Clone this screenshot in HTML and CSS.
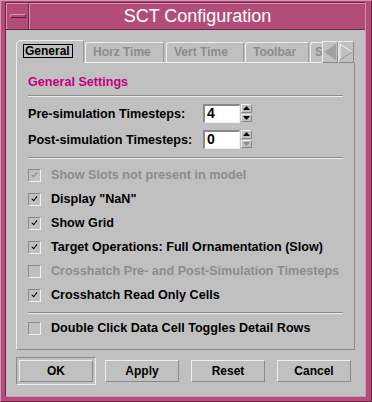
FILE: index.html
```html
<!DOCTYPE html>
<html lang="en">
<head>
    <meta charset="UTF-8">
    <link rel="stylesheet" href="styles.css">
    <title>SCT Configuration</title>
</head>
<body>
    <div class="window">
        <div class="inner">
            <div class="titlebar">
                <div class="menu-btn"><span></span></div>
                <div class="title">SCT Configuration</div>
            </div>
            <div class="client">
                <div class="tabs">
                    <div class="tab active"><span class="focus">General</span></div>
                    <div class="tab w-horz">Horz Time</div>
                    <div class="tab w-vert">Vert Time</div>
                    <div class="tab w-tool">Toolbar</div>
                    <div class="tab w-cut">S</div>
                    <div class="arrows">
                        <div class="arrow">
                            <svg width="14" height="18" viewBox="0 0 14 18"><polygon points="13,1 1,9 13,17" fill="#a2a2a2"/></svg>
                        </div>
                        <div class="arrow">
                            <svg width="14" height="18" viewBox="0 0 14 18"><polyline points="1,1 13,9" stroke="#f4f4f4" fill="none"/><polyline points="1,1 1,17 13,9" stroke="#f4f4f4" fill="none"/><line x1="1" y1="17" x2="13" y2="9" stroke="#8a8a8a"/></svg>
                        </div>
                    </div>
                </div>
                <div class="panel">
                    <div class="heading">General Settings</div>
                    <div class="sep"></div>
                    <div class="spin-row">
                        <span class="label">Pre-simulation Timesteps:</span>
                        <span class="field">4</span>
                        <span class="spinner">
                            <span class="sp-btn"><svg width="7" height="4" viewBox="0 0 7 4"><polygon points="0,4 3.5,0 7,4" fill="#000"/></svg></span>
                            <span class="sp-btn"><svg width="7" height="4" viewBox="0 0 7 4"><polygon points="0,0 3.5,4 7,0" fill="#000"/></svg></span>
                        </span>
                    </div>
                    <div class="spin-row">
                        <span class="label">Post-simulation Timesteps:</span>
                        <span class="field">0</span>
                        <span class="spinner">
                            <span class="sp-btn"><svg width="7" height="4" viewBox="0 0 7 4"><polygon points="0,4 3.5,0 7,4" fill="#000"/></svg></span>
                            <span class="sp-btn"><svg width="7" height="4" viewBox="0 0 7 4"><polygon points="0,0 3.5,4 7,0" fill="#8c8c8c"/></svg></span>
                        </span>
                    </div>
                    <div class="sep low"></div>
                    <div class="check disabled"><span class="box on"></span>Show Slots not present in model</div>
                    <div class="check"><span class="box on"></span>Display "NaN"</div>
                    <div class="check"><span class="box on"></span>Show Grid</div>
                    <div class="check"><span class="box on"></span>Target Operations: Full Ornamentation (Slow)</div>
                    <div class="check disabled"><span class="box"></span>Crosshatch Pre- and Post-Simulation Timesteps</div>
                    <div class="check"><span class="box on"></span>Crosshatch Read Only Cells</div>
                    <div class="sep last"></div>
                    <div class="check"><span class="box"></span>Double Click Data Cell Toggles Detail Rows</div>
                </div>
                <div class="buttons">
                    <div class="default-ring"><button>OK</button></div>
                    <button>Apply</button>
                    <button>Reset</button>
                    <button>Cancel</button>
                </div>
            </div>
        </div>
    </div>
</body>
</html>
```

FILE: styles.css
```css
*, ::after, ::before{
    margin: 0;
    padding: 0;
    box-sizing: border-box;
}
body{
    background: #fff;
    font-family: "Liberation Sans", Arial, sans-serif;
}
.window{
    width: 372px;
    height: 402px;
    background: #b24d79;
    border-top: 1px solid #d993b3;
    border-left: 1px solid #d993b3;
    border-bottom: 1px solid #6f2548;
    border-right: 1px solid #6f2548;
    padding: 1px 5px 4px 4px;
}
.inner{
    height: 100%;
    display: flex;
    flex-direction: column;
    border-top: 1px solid #6f2548;
    border-left: 1px solid #6f2548;
    border-bottom: 1px solid #d993b3;
    border-right: 1px solid #d993b3;
}
.titlebar{
    height: 27px;
    display: flex;
    flex-shrink: 0;
    border-bottom: 1px solid #6f2548;
    .menu-btn{
        width: 23px;
        display: flex;
        align-items: center;
        justify-content: center;
        border-top: 1px solid #d993b3;
        border-left: 1px solid #d993b3;
        border-right: 1px solid #6f2548;
        span{
            width: 16px;
            height: 4px;
            border-top: 1px solid #d993b3;
            border-left: 1px solid #d993b3;
            border-bottom: 1px solid #5a1c3a;
            border-right: 1px solid #5a1c3a;
            margin-top: -2px;
        }
    }
    .title{
        flex: 1;
        text-align: center;
        color: #fff;
        font-size: 18px;
        line-height: 25px;
        border-top: 1px solid #d993b3;
        border-left: 1px solid #d993b3;
    }
}
.client{
    flex: 1;
    background: #c0c0c0;
    padding: 10px 10px 0 10px;
}
.tabs{
    display: flex;
    align-items: flex-end;
    height: 22px;
    font-size: 12px;
    font-weight: bold;
    .tab{
        height: 20px;
        line-height: 18px;
        color: #8c8c8c;
        border-top: 1px solid #eeeeee;
        border-left: 1px solid #eeeeee;
        border-right: 1px solid #9a9a9a;
        border-top-left-radius: 3px;
        padding-left: 7px;
        overflow: hidden;
        white-space: nowrap;
        margin-right: 1px;
    }
    .active{
        width: 68px;
        height: 23px;
        margin-bottom: -1px;
        color: #000;
        padding-left: 6px;
        padding-top: 3px;
        border-top-left-radius: 5px;
        background: #c0c0c0;
        position: relative;
        z-index: 1;
        .focus{
            display: block;
            width: 50px;
            height: 14px;
            line-height: 12px;
            border: 1px solid #000;
            padding-left: 1px;
        }
    }
    .w-horz{ width: 79px; margin-right: 2px; }
    .w-vert{ width: 78px; }
    .w-tool{ width: 64px; }
    .w-cut{ width: 12px; padding-left: 4px; margin-right: 0; border-right: none; }
    .arrows{
        display: flex;
        height: 22px;
        margin-bottom: -1px;
        .arrow{
            width: 16px;
            display: flex;
            align-items: center;
            justify-content: center;
            border-top: 1px solid #eeeeee;
            border-left: 1px solid #eeeeee;
            border-bottom: 1px solid #8a8a8a;
            border-right: 1px solid #8a8a8a;
        }
    }
}
.panel{
    width: 339px;
    height: 288px;
    border-top: 1px solid #eeeeee;
    border-left: 1px solid #eeeeee;
    border-bottom: 1px solid #888;
    border-right: 1px solid #888;
    padding: 11px 11px 0 11px;
    font-size: 12.6px;
    font-weight: bold;
    white-space: nowrap;
    .heading{
        color: #c0007e;
        height: 16px;
        line-height: 16px;
    }
    .sep{
        height: 2px;
        border-top: 1px solid #8a8a8a;
        border-bottom: 1px solid #ececec;
        margin: 5px 0 7px 0;
    }
    .sep.low{
        margin: 8px 0 4px 0;
    }
    .sep.last{
        margin: 5px 0 2px 0;
    }
}
.spin-row{
    display: flex;
    align-items: center;
    height: 19px;
    margin-bottom: 7px;
    .label{
        width: 175px;
    }
    .field{
        width: 37px;
        height: 19px;
        background: #fff;
        border-top: 2px solid #888;
        border-left: 2px solid #888;
        border-bottom: 1px solid #eee;
        border-right: 1px solid #eee;
        font-size: 14px;
        line-height: 15px;
        padding-left: 2px;
    }
    .spinner{
        display: flex;
        flex-direction: column;
        margin-left: 1px;
        height: 19px;
    }
    .sp-btn{
        width: 11px;
        height: 9px;
        display: flex;
        align-items: center;
        justify-content: center;
        border-top: 1px solid #eee;
        border-left: 1px solid #eee;
        border-bottom: 1px solid #888;
        border-right: 1px solid #888;
        margin-bottom: 1px;
    }
}
.check{
    display: flex;
    align-items: center;
    height: 24px;
    color: #000;
    .box{
        width: 13px;
        height: 13px;
        margin-right: 10px;
        border-top: 1px solid #8a8a8a;
        border-left: 1px solid #8a8a8a;
        border-bottom: 1px solid #f0f0f0;
        border-right: 1px solid #f0f0f0;
        position: relative;
    }
    .box.on::after{
        content: '';
        position: absolute;
        left: 4px;
        top: 1px;
        width: 3px;
        height: 6px;
        border-right: 1.5px solid #000;
        border-bottom: 1.5px solid #000;
        transform: rotate(40deg);
    }
}
.check.disabled{
    color: #8c8c8c;
    .box.on::after{
        border-color: #8c8c8c;
    }
}
.buttons{
    display: flex;
    align-items: center;
    gap: 12px;
    margin-top: 7px;
    height: 28px;
    button{
        width: 74px;
        height: 22px;
        background: #c0c0c0;
        font-family: "Liberation Sans", Arial, sans-serif;
        font-size: 12px;
        font-weight: bold;
        color: #000;
        border-top: 1px solid #eeeeee;
        border-left: 1px solid #eeeeee;
        border-bottom: 1px solid #8a8a8a;
        border-right: 1px solid #8a8a8a;
    }
    .default-ring{
        width: 80px;
        height: 28px;
        padding: 2px;
        margin-right: -3px;
        border-top: 1px solid #8a8a8a;
        border-left: 1px solid #8a8a8a;
        border-bottom: 1px solid #eeeeee;
        border-right: 1px solid #eeeeee;
    }
}
```
